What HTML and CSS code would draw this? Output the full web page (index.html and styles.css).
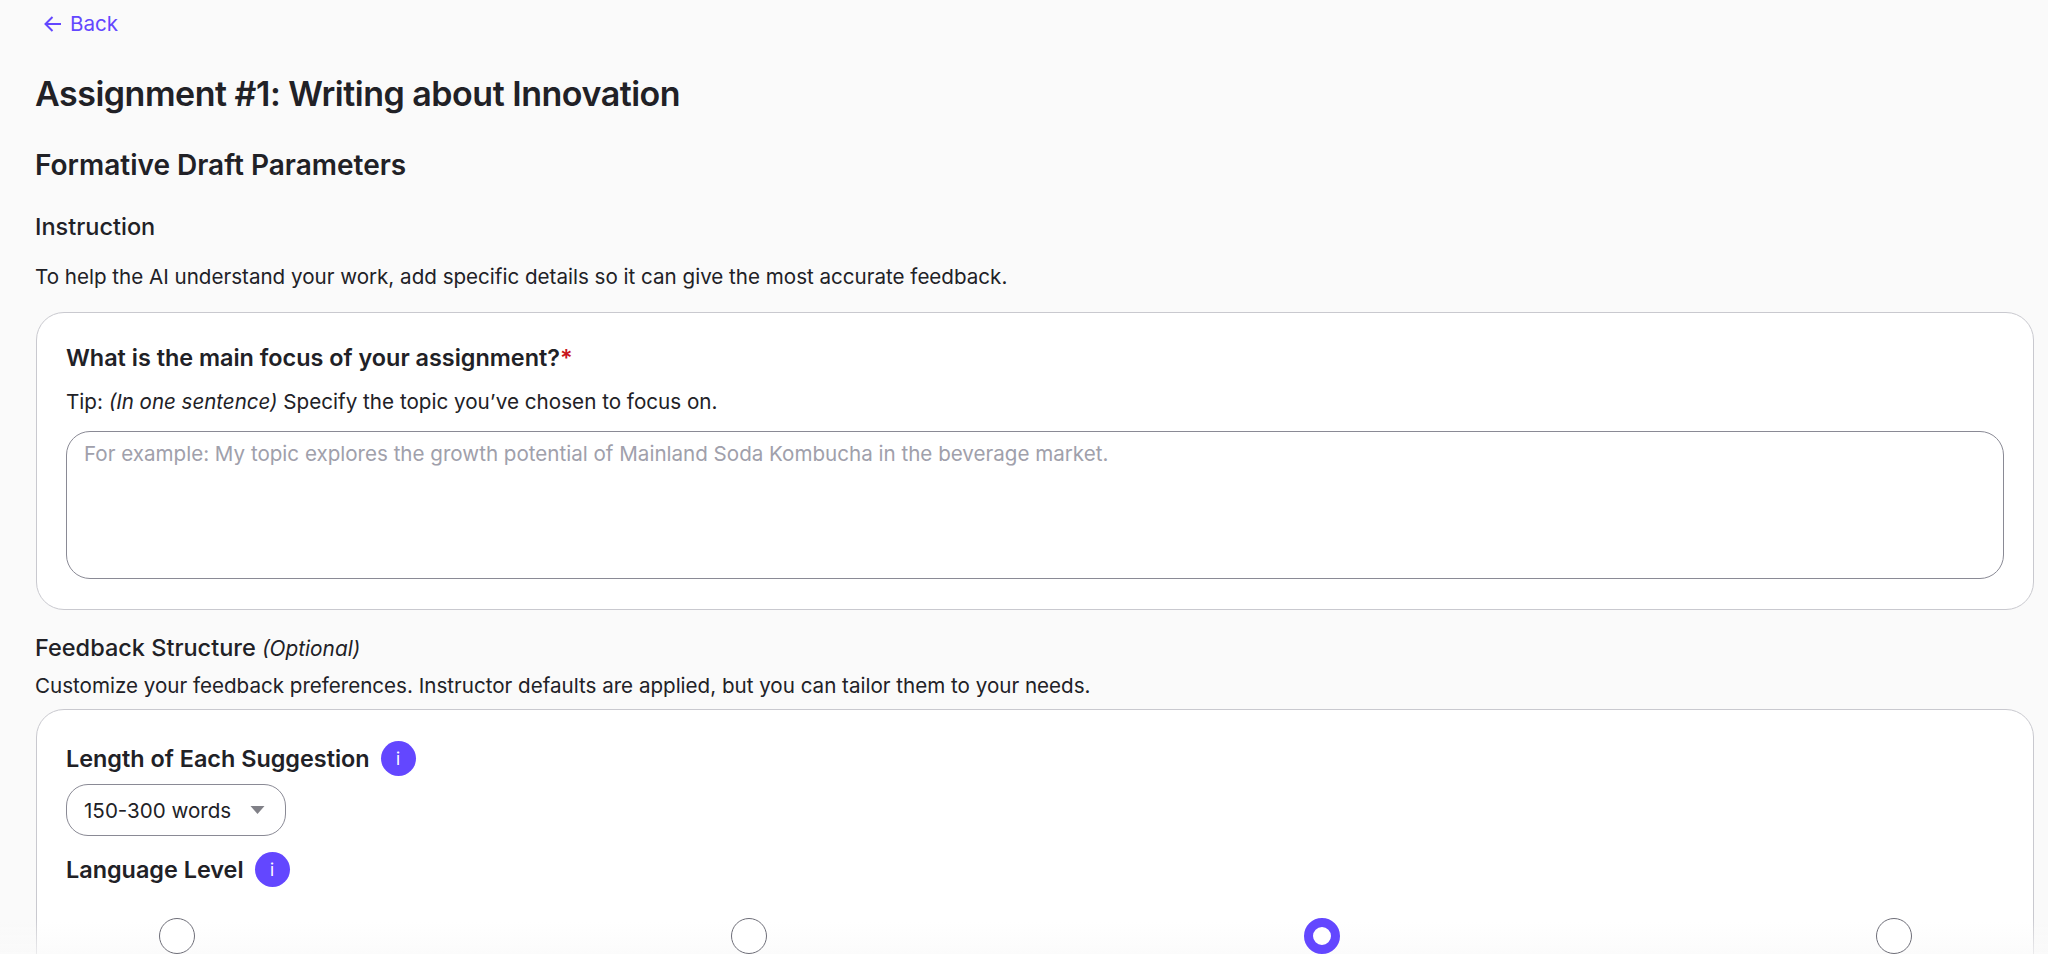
FILE: index.html
```html
<!DOCTYPE html>
<html lang="en">
<head>
<meta charset="utf-8">
<title>Assignment #1: Writing about Innovation</title>
<link rel="stylesheet" href="styles.css">
</head>
<body>
<main class="page">
  <a class="back" href="#">
    <svg class="back-icon" viewBox="0 0 20 20" aria-hidden="true"><path d="M18 10H2.5M9.5 3 2.5 10l7 7"/></svg>
    <span>Back</span>
  </a>
  <h1 class="title">Assignment #1: Writing about Innovation</h1>
  <h2 class="section">Formative Draft Parameters</h2>
  <h3 class="sub sub-instruction">Instruction</h3>
  <p class="text text-instruction">To help the AI understand your work, add specific details so it can give the most accurate feedback.</p>
  <section class="card card-focus">
    <h4 class="label">What is the main focus of your assignment?<span class="req">*</span></h4>
    <p class="text tip">Tip: <em class="tip-em">(In one sentence)</em> Specify the topic you’ve chosen to focus on.</p>
    <textarea class="area" placeholder="For example: My topic explores the growth potential of Mainland Soda Kombucha in the beverage market."></textarea>
  </section>
  <h3 class="sub sub-feedback">Feedback Structure <em class="opt">(Optional)</em></h3>
  <p class="text text-feedback">Customize your feedback preferences. Instructor defaults are applied, but you can tailor them to your needs.</p>
  <section class="card card-feedback">
    <div class="label-row">
      <h4 class="label">Length of Each Suggestion</h4>
      <span class="info">i</span>
    </div>
    <div class="select">
      <span>150-300 words</span>
      <svg class="caret" viewBox="0 0 14 8" aria-hidden="true"><path d="M0 0h14L7 8z"/></svg>
    </div>
    <div class="label-row label-row-lang">
      <h4 class="label">Language Level</h4>
      <span class="info">i</span>
    </div>
    <div class="levels">
      <div class="level"><span class="radio"></span></div>
      <div class="level"><span class="radio"></span></div>
      <div class="level"><span class="radio radio-on"></span></div>
      <div class="level"><span class="radio"></span></div>
    </div>
  </section>
</main>
<div class="fade"></div>
</body>
</html>
```
FILE: styles.css
```css
* { box-sizing: border-box; }
html, body { height: 100%; margin: 0; overflow: hidden; }
body {
  background: #fafafa;
  color: #212126;
  font-family: Inter, "Liberation Sans", sans-serif;
}
.page { padding: 10px 14px 0 36px; }
.back {
  display: flex;
  align-items: center;
  gap: 7px;
  height: 28px;
  margin-left: 7px;
  color: #6347ff;
  font-size: 20.6px;
  line-height: 28px;
  text-decoration: none;
}
.back-icon { width: 20px; height: 20px; fill: none; stroke: #6347ff; stroke-width: 2; }
.title { margin: 35px 0 0 -1px; font-size: 34px; line-height: 42px; font-weight: 600; letter-spacing: -0.48px; }
.section { margin: 32px 0 0 -1px; font-size: 28px; line-height: 36px; font-weight: 600; }
.sub { margin: 0 0 0 -1px; font-size: 23.5px; line-height: 32px; font-weight: 500; }
.sub-instruction { margin-top: 28px; }
.text { margin: 0; font-size: 20.58px; line-height: 28px; }
.text-instruction { margin: 20px 0 0 -1px; }
.card { background: #fff; border: 1px solid #c9c9cf; border-radius: 28px; padding: 29px 29px 29px; }
.card-focus { height: 298px; margin-top: 21px; }
.label { margin: 0; font-size: 23.4px; line-height: 32px; font-weight: 600; }
.req { color: #c8161d; }
.tip { margin-top: 14px; font-size: 20.65px; }
.tip-em { font-size: 20.5px; }
.area {
  display: block;
  width: 100%;
  height: 148px;
  margin-top: 15px;
  padding: 8px 17px;
  background: #fff;
  border: 1px solid #8a8a95;
  border-radius: 24px;
  color: #212126;
  font: 20.58px/28px Inter, "Liberation Sans", sans-serif;
  resize: none;
  outline: none;
}
.area::placeholder { color: #a0a0ab; opacity: 1; }
.sub-feedback { margin-top: 22px; }
.opt { font-size: 20.8px; font-weight: 400; }
.text-feedback { margin: 7px 0 0 -1px; }
.card-feedback { height: 400px; margin-top: 9px; padding-top: 31px; }
.label-row { display: flex; align-items: center; gap: 11px; }
.label-row-lang { margin-top: 16px; }
.info {
  display: flex;
  align-items: center;
  justify-content: center;
  width: 35px;
  height: 35px;
  border-radius: 50%;
  background: #6347ff;
  color: #fff;
  font-size: 17px;
}
.select {
  display: flex;
  align-items: center;
  justify-content: space-between;
  width: 220px;
  height: 52px;
  margin-top: 8px;
  padding: 0 20px 0 17px;
  border: 1px solid #8a8a95;
  border-radius: 22px;
  font-size: 20.58px;
}
.caret { width: 15px; height: 8px; fill: #808087; }
.levels { display: flex; justify-content: space-between; margin-top: 31px; padding: 0 1px 0 2px; }
.level { display: flex; justify-content: center; width: 218px; }
.radio { display: block; position: relative; z-index: 1; width: 36px; height: 36px; border: 1px solid #6e6e78; border-radius: 50%; background: #fff; }
.radio-on { border: 9px solid #6347ff; }
.fade {
  position: fixed;
  left: 0;
  right: 0;
  bottom: 0;
  height: 36px;
  background: linear-gradient(rgba(250, 250, 250, 0), rgba(250, 250, 250, 0.7));
  pointer-events: none;
}
```
